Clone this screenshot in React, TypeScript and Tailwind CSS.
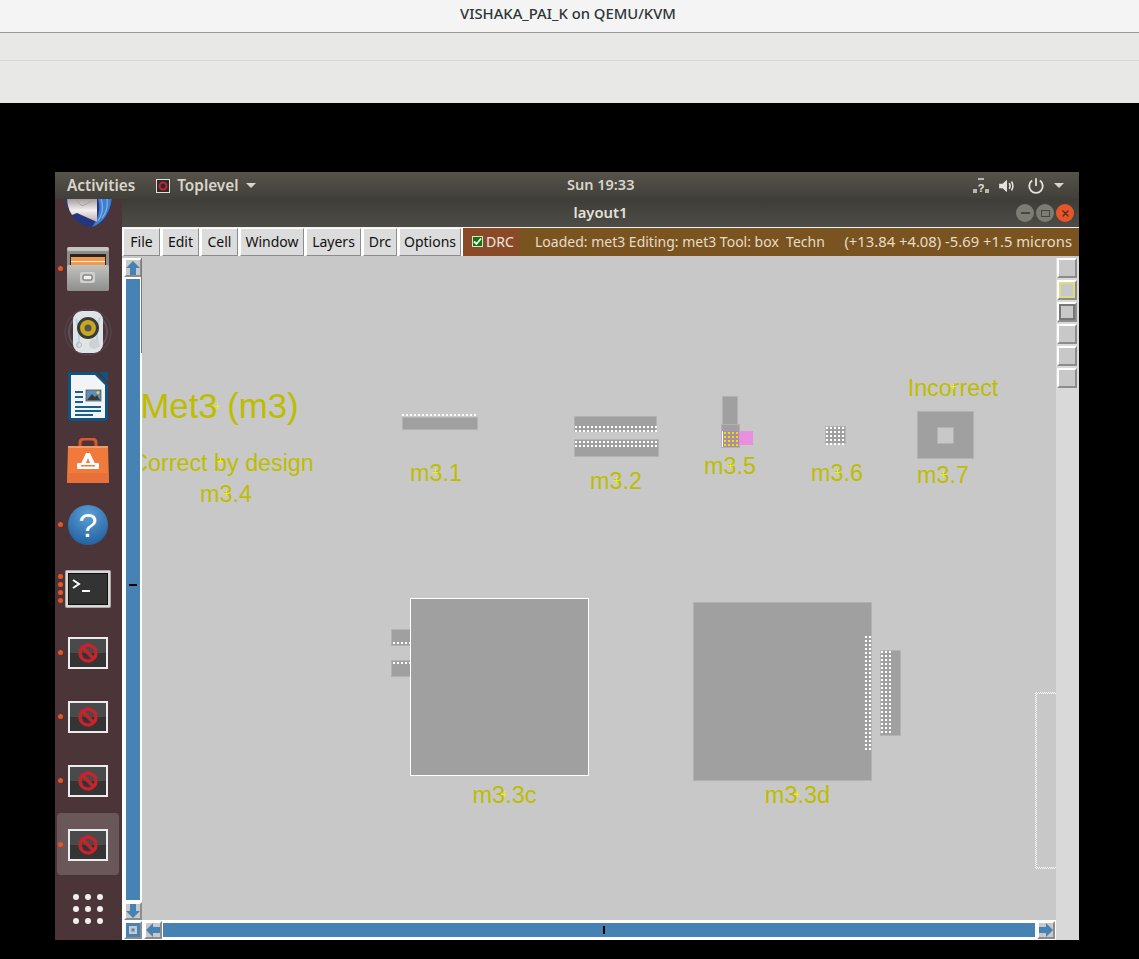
import { ReactNode } from 'react';

const menuItems = [
  { label: 'File', w: 'w-[37px]' },
  { label: 'Edit', w: 'w-[37px]' },
  { label: 'Cell', w: 'w-[37px]' },
  { label: 'Window', w: 'w-[64px]' },
  { label: 'Layers', w: 'w-[55px]' },
  { label: 'Drc', w: 'w-[34px]' },
  { label: 'Options', w: 'w-[62px]' },
];

const labels = [
  { text: 'Met3 (m3)', x: 219.5, y: 418, size: 34.7, cross: [217, 406] },
  { text: 'Correct by design', x: 222.5, y: 471, size: 23.3, cross: [220, 461] },
  { text: 'm3.4', x: 226, y: 502, size: 23.3, cross: [226, 493] },
  { text: 'm3.1', x: 436, y: 481, size: 23.3, cross: [435, 472] },
  { text: 'm3.2', x: 616, y: 489, size: 23.3, cross: [616, 480] },
  { text: 'm3.5', x: 730, y: 474, size: 23.3, cross: [730, 465] },
  { text: 'm3.6', x: 837, y: 481, size: 23.3, cross: [837, 472] },
  { text: 'm3.7', x: 943, y: 483, size: 23.3, cross: [943, 474] },
  { text: 'Incorrect', x: 953, y: 396, size: 23.3, cross: [953, 386] },
  { text: 'm3.3c', x: 504.5, y: 803, size: 23.5, cross: [504, 794] },
  { text: 'm3.3d', x: 797.5, y: 803, size: 23.5, cross: [797, 794] },
];

// x, y, w, h in page pixels, viewBox of the canvas starts at 142,258
const boxes = [
  [402, 417, 76, 13],
  [574, 416, 83, 16],
  [574, 439, 85, 18],
  [722, 396, 16, 30],
  [721, 424, 19, 24],
  [825, 426, 21, 18],
  [391, 629, 21, 17],
  [391, 660, 21, 17],
  [693, 602, 179, 179],
  [880, 650, 21, 86],
];

function Dots({ x, y, cols, rows, color = '#ffffff', step = 4 }: { x: number; y: number; cols: number; rows: number; color?: string; step?: number }) {
  return (
    <g fill={color}>
      {Array.from({ length: rows }).map((_, r) =>
        Array.from({ length: cols }).map((_, c) => (
          <rect key={`${r}-${c}`} x={x + c * step} y={y + r * step} width="2" height="2" />
        ))
      )}
    </g>
  );
}

function LayoutCanvas() {
  return (
    <svg className="flex-1 h-full bg-[#c8c8c8] overflow-visible" viewBox="142 258 914 662">
      <defs>
        <clipPath id="canvasClip">
          <rect x="139.5" y="258" width="916.5" height="662" />
        </clipPath>
        <pattern id="halo" width="2" height="2" patternUnits="userSpaceOnUse">
          <rect width="1" height="1" fill="#ffffff" />
          <rect x="1" y="1" width="1" height="1" fill="#ffffff" />
        </pattern>
      </defs>

      {boxes.map(([x, y, w, h], i) => (
        <rect key={i} x={x + 0.5} y={y + 0.5} width={w - 1} height={h - 1} fill="#a0a0a0" stroke="#b2b2b2" />
      ))}

      {/* m3.7 with hole */}
      <rect x="917.5" y="411.5" width="56" height="47" fill="#a0a0a0" stroke="#b2b2b2" />
      <rect x="937.5" y="427.5" width="16" height="16" fill="#c8c8c8" stroke="#b2b2b2" />

      {/* m3.3c, selected */}
      <rect x="410.5" y="598.5" width="178" height="177" fill="#a0a0a0" stroke="#ffffff" />

      {/* m3.5 via with pink contact */}
      <rect x="739" y="431" width="14" height="14" fill="#e88fe0" />
      <rect x="722" y="431" width="17" height="16" fill="#a88fa6" />
      <Dots x={724} y={432} cols={4} rows={4} color="#f0e000" />
      <rect x="722" y="431" width="1" height="16" fill="#ffffff" />

      {/* drc dots */}
      <Dots x={402} y={414} cols={19} rows={1} />
      <Dots x={575} y={426} cols={21} rows={2} />
      <Dots x={575} y={441} cols={21} rows={2} />
      <Dots x={826} y={427} cols={5} rows={5} />
      <Dots x={393} y={642} cols={5} rows={1} />
      <Dots x={393} y={662} cols={5} rows={1} />
      <Dots x={865} y={636} cols={2} rows={29} />
      <Dots x={881} y={651} cols={3} rows={21} />

      {/* dotted cell outline running off the edge */}
      <rect x="1035" y="692" width="21" height="2" fill="url(#halo)" />
      <rect x="1035" y="867" width="21" height="2" fill="url(#halo)" />
      <rect x="1035" y="692" width="2" height="177" fill="url(#halo)" />

      <g clipPath="url(#canvasClip)" fontFamily="'Liberation Sans', Arial, sans-serif" fill="#bdbd00" textAnchor="middle">
        {labels.map((l) => (
          <text key={l.text} x={l.x} y={l.y} fontSize={l.size}>
            {l.text}
          </text>
        ))}
        {labels.map((l) => (
          <path
            key={`${l.text}-cross`}
            d={`M${l.cross[0] - 3} ${l.cross[1] + 0.5}h6M${l.cross[0] + 0.5} ${l.cross[1] - 3}v6`}
            stroke="#f0f000"
            strokeWidth="1"
            fill="none"
          />
        ))}
      </g>
    </svg>
  );
}

function Bevel({ className, children }: { className?: string; children?: ReactNode }) {
  return (
    <div className={`flex items-center justify-center bg-[#c8c8c8] border-2 border-t-white border-l-white border-r-[#8c8c8c] border-b-[#8c8c8c] ${className ?? ''}`}>
      {children}
    </div>
  );
}

function Arrow({ dir }: { dir: 'up' | 'down' | 'left' | 'right' }) {
  const rot = { up: 0, down: 180, left: 270, right: 90 }[dir];
  return (
    <svg width="14" height="14" viewBox="0 0 14 14">
      <path d="M7 0 14 7H10V14H4V7H0Z" fill="#4682b4" transform={`rotate(${rot} 7 7)`} />
    </svg>
  );
}

function Thunderbird() {
  return (
    <svg width="48" height="48" viewBox="0 0 48 48">
      <defs>
        <linearGradient id="birdMail" x1="0" y1="0" x2="0" y2="1">
          <stop offset="0%" stopColor="#8f8688" />
          <stop offset="55%" stopColor="#f4f0ee" />
          <stop offset="100%" stopColor="#b5aeb0" />
        </linearGradient>
      </defs>
      <path d="M1 15C2 32 15 46 28 46 42 42 48 30 48 15Z" fill="#26357f" />
      <path d="M33 15C37 24 36 36 28 46 40 42 47 30 48 15Z" fill="#3f7fd0" />
      <path d="M37 18C40 26 38 34 34 40M43 18C44 25 42 32 38 37" fill="none" stroke="#7fb0e8" strokeWidth="1.2" />
      <path d="M3 15C3 24 5 29 8 34L13 32 33 41V15Z" fill="url(#birdMail)" />
      <path d="M10 17 18 25 30 19" fill="none" stroke="#a8a09c" strokeWidth="1" />
    </svg>
  );
}

function Drawer() {
  return (
    <svg width="44" height="44" viewBox="0 0 44 44">
      <defs>
        <linearGradient id="drawerFront" x1="0" y1="0" x2="0" y2="1">
          <stop offset="0%" stopColor="#c2c2c0" />
          <stop offset="100%" stopColor="#8e8e8c" />
        </linearGradient>
      </defs>
      <rect x="1" y="0" width="42" height="44" rx="3" fill="#8e8e8c" />
      <rect x="1" y="0" width="42" height="4" rx="2" fill="#c4c4c2" />
      <rect x="4" y="7" width="36" height="11" fill="#2c2420" />
      <rect x="5" y="10" width="34" height="8" fill="#f09a50" />
      <rect x="5" y="14" width="34" height="1" fill="#fff0d8" />
      <rect x="1" y="18" width="42" height="26" rx="2" fill="url(#drawerFront)" />
      <rect x="14" y="25" width="15" height="11" rx="2" fill="#d0d0ce" />
      <rect x="17" y="28" width="9" height="5" rx="1" fill="#f0f0ee" stroke="#5a5a5a" />
    </svg>
  );
}

function Speaker() {
  return (
    <svg width="48" height="48" viewBox="0 0 48 48">
      <circle cx="24" cy="23" r="23" fill="none" stroke="#6c6a78" strokeWidth="1" opacity="0.35" />
      <circle cx="24" cy="23" r="19" fill="none" stroke="#7a7c90" strokeWidth="2" opacity="0.4" />
      <rect x="9" y="2" width="30" height="42" rx="9" fill="#dfe4e6" />
      <path d="M12 10Q18 26 13 38M36 8Q30 24 35 38" fill="none" stroke="#a8c4d8" strokeWidth="2" opacity="0.6" />
      <circle cx="24" cy="19" r="11" fill="#3a3a38" />
      <circle cx="24" cy="19" r="8" fill="#c8a820" />
      <circle cx="24" cy="19" r="3.5" fill="#56564e" />
      <circle cx="30" cy="35" r="5" fill="#cfd2d2" />
      <circle cx="15" cy="36" r="2.5" fill="none" stroke="#b8baba" />
    </svg>
  );
}

function Writer() {
  return (
    <svg width="42" height="50" viewBox="0 0 42 50">
      <path d="M2 0H29L41 12V46Q41 49 38 49H4Q1 49 1 46V2Q1 0 2 0Z" fill="#10537f" />
      <path d="M4 3H28L38 13V46H4Z" fill="#f2f4f6" />
      <path d="M32 0H41V10Z" fill="#10537f" />
      <g fill="#15608f">
        <rect x="8" y="19" width="8" height="2" />
        <rect x="8" y="24" width="8" height="2" />
        <rect x="8" y="29" width="8" height="2" />
        <rect x="8" y="34" width="26" height="2" />
        <rect x="8" y="38" width="26" height="2" />
        <rect x="8" y="42" width="18" height="2" />
      </g>
      <rect x="19" y="18" width="15" height="11" fill="#5f8fb4" stroke="#4a4a4a" strokeWidth="0.7" />
      <path d="M20 28 25 22 28 25 30 23 33 28Z" fill="#3a3a3a" />
      <circle cx="31" cy="20.5" r="1.5" fill="#f0d050" />
    </svg>
  );
}

function Store() {
  return (
    <svg width="44" height="46" viewBox="0 0 44 46">
      <path d="M14 12V5Q14 1 18 1H26Q30 1 30 5V12" fill="none" stroke="#d8592a" strokeWidth="3" />
      <path d="M2 8H42L43 45H1Z" fill="#f07a3c" />
      <path d="M1.3 35H42.7L43 45H1Z" fill="#e8703a" />
      <path d="M2 8H42V10H2Z" fill="#f49a68" />
      <path d="M20 15H24L31 30H26L22 20 18 30H13Z" fill="#ffffff" />
      <rect x="11" y="25" width="22" height="6" rx="1" fill="#ffffff" />
      <rect x="15" y="27" width="14" height="1.5" fill="#f07a3c" />
    </svg>
  );
}

function Help() {
  return (
    <svg width="42" height="42" viewBox="0 0 42 42">
      <defs>
        <radialGradient id="helpBall" cx="50%" cy="25%" r="80%">
          <stop offset="0%" stopColor="#5d9fd8" />
          <stop offset="100%" stopColor="#1f5f9c" />
        </radialGradient>
      </defs>
      <circle cx="21" cy="21" r="20" fill="url(#helpBall)" />
      <text x="21" y="33" textAnchor="middle" fontSize="34" fontFamily="'Liberation Sans', sans-serif" fill="#ffffff">
        ?
      </text>
    </svg>
  );
}

function Terminal() {
  return (
    <svg width="46" height="38" viewBox="0 0 46 38">
      <rect x="0.5" y="0.5" width="45" height="37" rx="1" fill="#d8d8d6" stroke="#a8a8a6" />
      <rect x="3" y="3" width="40" height="32" fill="#101010" />
      <rect x="4" y="4" width="38" height="30" fill="#333333" />
      <path d="M8 10 14 14 8 18" fill="none" stroke="#ffffff" strokeWidth="2" />
      <rect x="17" y="20" width="8" height="2" fill="#ffffff" />
    </svg>
  );
}

function Blocked() {
  return (
    <svg width="40" height="32" viewBox="0 0 40 32">
      <rect x="0" y="0" width="40" height="32" fill="#ececec" />
      <rect x="2" y="2" width="36" height="28" fill="#4a4a4a" />
      <rect x="2" y="16" width="36" height="14" fill="#343434" />
      <circle cx="20" cy="16" r="8" fill="none" stroke="#c8222c" strokeWidth="3.4" />
      <path d="M14.5 10.5 25.5 21.5" stroke="#c8222c" strokeWidth="3.4" />
    </svg>
  );
}

function AppGrid() {
  return (
    <svg width="36" height="36" viewBox="0 0 36 36" fill="#ffffff" opacity="0.92">
      {[6, 18, 30].map((cy) =>
        [6, 18, 30].map((cx) => <circle key={`${cx}-${cy}`} cx={cx} cy={cy} r="3" />)
      )}
    </svg>
  );
}

function DockCell({ pips = 0, active, children }: { pips?: number; active?: boolean; children: ReactNode }) {
  return (
    <div className="relative h-16 w-full flex items-center justify-center shrink-0">
      {active && <div className="absolute left-[2px] top-0 w-[62px] h-[62px] rounded bg-[#6a575a]" />}
      <div className="relative flex -ml-px">{children}</div>
      {pips > 0 && (
        <div className="absolute left-[3px] top-0 bottom-[2px] flex flex-col justify-center gap-[3px]">
          {Array.from({ length: pips }).map((_, i) => (
            <span key={i} className="w-[5px] h-[5px] rounded-full bg-[#e95420]" />
          ))}
        </div>
      )}
    </div>
  );
}

function Dock() {
  return (
    <div className="w-[67px] h-full bg-[#4b3539] overflow-hidden flex flex-col shrink-0">
      <div className="flex flex-col -mt-[26px]">
        <DockCell><Thunderbird /></DockCell>
        <DockCell pips={1}><Drawer /></DockCell>
        <DockCell><Speaker /></DockCell>
        <DockCell><Writer /></DockCell>
        <DockCell><Store /></DockCell>
        <DockCell pips={1}><Help /></DockCell>
        <DockCell pips={4}><Terminal /></DockCell>
        <DockCell pips={1}><Blocked /></DockCell>
        <DockCell pips={1}><Blocked /></DockCell>
        <DockCell pips={1}><Blocked /></DockCell>
        <DockCell pips={1} active><Blocked /></DockCell>
        <DockCell><AppGrid /></DockCell>
      </div>
    </div>
  );
}

function TopBar() {
  return (
    <div className="relative h-[27px] flex items-center bg-gradient-to-b from-[#56534a] to-[#403f39] text-[15.3px] font-semibold text-[#d9d5ca]">
      <span className="ml-3">Activities</span>
      <div className="ml-[21px] flex items-center gap-[7px]">
        <svg width="14" height="14" viewBox="0 0 14 14">
          <rect x="0.5" y="0.5" width="13" height="13" fill="#2c2c2c" stroke="#e0e0e0" />
          <circle cx="7" cy="7" r="3.5" fill="none" stroke="#c8222c" strokeWidth="2" />
        </svg>
        <span>Toplevel</span>
        <span className="w-0 h-0 border-x-[5px] border-x-transparent border-t-[5px] border-t-[#d9d5ca]" />
      </div>
      <span className="absolute left-[512px] top-[2px] text-[14.5px]">Sun 19:33</span>
      <div className="ml-auto mr-[15px] flex items-center">
        <svg width="16" height="17" viewBox="0 0 16 17" fill="#b8b6ae">
          <rect x="0" y="12" width="4" height="4" />
          <rect x="12" y="12" width="4" height="4" />
          <rect x="5" y="1" width="6" height="2" />
          <text x="8" y="15" textAnchor="middle" fontSize="11" fontWeight="700" fontFamily="'Liberation Sans', sans-serif" fill="#e4e2da">?</text>
        </svg>
        <svg className="ml-[9px]" width="18" height="18" viewBox="0 0 16 16" fill="none" stroke="#e4e2da" strokeWidth="1.4">
          <path d="M1 6H4L8 2.5V13.5L4 10H1Z" fill="#e4e2da" stroke="none" />
          <path d="M10 5.5Q11.5 8 10 10.5M12 4Q14.5 8 12 12" />
        </svg>
        <svg className="ml-[11px]" width="18" height="18" viewBox="0 0 16 16" fill="none" stroke="#e4e2da" strokeWidth="1.6">
          <path d="M8 1V8M4.6 3.2A6 6 0 1 0 11.4 3.2" />
        </svg>
        <span className="ml-[9px] w-0 h-0 border-x-[5px] border-x-transparent border-t-[5px] border-t-[#d9d5ca]" />
      </div>
    </div>
  );
}

function WindowTitle() {
  return (
    <div className="relative h-[28px] flex items-center justify-center pb-[2px] bg-gradient-to-b from-[#3f3d38] to-[#4d4c46] text-[14.8px] font-semibold text-[#e4e2da]">
      <span>layout1</span>
      <div className="absolute right-[5px] top-[5px] flex gap-[2px]">
        <span className="w-[18px] h-[18px] rounded-full bg-[#7d7c74] flex items-center justify-center">
          <span className="w-[9px] h-[2px] bg-[#48473f]" />
        </span>
        <span className="w-[18px] h-[18px] rounded-full bg-[#7d7c74] flex items-center justify-center">
          <span className="w-[9px] h-[7px] border border-[#48473f]" />
        </span>
        <span className="w-[18px] h-[18px] rounded-full bg-[#e5562a] flex items-center justify-center">
          <svg width="9" height="9" viewBox="0 0 9 9" stroke="#5e2a18" strokeWidth="1.4">
            <path d="M1.5 1.5 7.5 7.5M7.5 1.5 1.5 7.5" />
          </svg>
        </span>
      </div>
    </div>
  );
}

function MenuBar() {
  return (
    <div className="h-[31px] flex border-t border-[#f0f0f0] border-b-2 border-b-[#c8c8c8] bg-white pl-[1px]">
      <div className="flex gap-[2px]">
        {menuItems.map((m) => (
          <div
            key={m.label}
            className={`${m.w} flex items-center justify-center pb-px bg-[#dcdcdc] border border-t-white border-l-white border-r-[#8c8c8c] border-b-[#8c8c8c] text-[14px] text-[#111111]`}
          >
            {m.label}
          </div>
        ))}
      </div>
      <div className="ml-[2px] w-[56px] flex items-center gap-[3px] pl-[9px] pb-px bg-[#8a4a28] text-[14px] text-[#f0e8e0]">
        <span className="w-[11px] h-[11px] flex items-center justify-center bg-[#0a7a0a] border border-[#e0e0d8]">
          <svg width="9" height="9" viewBox="0 0 9 9" fill="none" stroke="#ffffff" strokeWidth="1.8">
            <path d="M1 4.5 3.5 7 8 1.5" />
          </svg>
        </span>
        <span>DRC</span>
      </div>
      <div className="flex-1 flex items-center justify-between pl-4 pr-[7px] pb-px bg-[#7a5420] text-[#e6dcc8] whitespace-pre">
        <span className="text-[14px]">Loaded: met3 Editing: met3 Tool: box  Techn</span>
        <span className="text-[14.8px]">(+13.84 +4.08) -5.69 +1.5 microns</span>
      </div>
    </div>
  );
}

function LeftScroll() {
  return (
    <div className="relative w-[20px] h-full flex flex-col items-center bg-white pl-px">
      <Bevel className="w-[18px] h-[19px] shrink-0"><Arrow dir="up" /></Bevel>
      <div className="relative flex-1 w-[14px] my-[2px] bg-[#4682b4]">
        <div className="absolute left-[3px] top-[305px] w-[8px] h-[2px] bg-black" />
      </div>
      <Bevel className="w-[18px] h-[18px] shrink-0"><Arrow dir="down" /></Bevel>
      <div className="absolute right-0 top-0 w-px h-[95px] bg-[#7a7a7a]" />
    </div>
  );
}

function RightPanel() {
  return (
    <div className="w-[23px] h-full bg-[#d9d9d9] flex flex-col gap-[2px] pl-px pr-[2px]">
      <Bevel className="h-[20px]" />
      <Bevel className="h-[20px]">
        <span className="w-[16px] h-[16px] border-2 border-[#dcdc80]" />
      </Bevel>
      <Bevel className="h-[20px]">
        <span className="w-[16px] h-[16px] border-2 border-[#777777]" />
      </Bevel>
      <Bevel className="h-[20px]" />
      <Bevel className="h-[20px]" />
      <Bevel className="h-[20px]" />
    </div>
  );
}

function BottomScroll() {
  return (
    <div className="h-[20px] flex items-center bg-white">
      <Bevel className="ml-[2px] w-[18px] h-[18px] shrink-0">
        <svg width="14" height="14" viewBox="0 0 14 14">
          <path fillRule="evenodd" d="M0 0H14V14H0ZM3 3V11H11V3Z" fill="#4682b4" />
          <rect x="5.5" y="5.5" width="3" height="3" fill="#4682b4" />
        </svg>
      </Bevel>
      <Bevel className="ml-[2px] w-[18px] h-[18px] shrink-0"><Arrow dir="left" /></Bevel>
      <div className="relative ml-[1px] flex-1 h-[14px] bg-[#4682b4]">
        <div className="absolute left-[440px] top-[3px] w-[2px] h-[8px] bg-black" />
      </div>
      <Bevel className="ml-[2px] w-[18px] h-[18px] shrink-0"><Arrow dir="right" /></Bevel>
      <div className="ml-px w-[23px] h-full bg-[#d9d9d9] shrink-0" />
    </div>
  );
}

export default function App() {
  return (
    <div className="w-[1139px] h-[959px] bg-black flex flex-col overflow-hidden font-['Noto_Sans',sans-serif]">
      {/* host viewer chrome */}
      <div className="h-[33px] pb-[5px] pr-[3px] bg-[#f4f4f4] border-b border-[#999999] flex items-center justify-center text-[14.8px] font-medium text-[#2e3436] shrink-0">
        VISHAKA_PAI_K on QEMU/KVM
      </div>
      <div className="h-[28px] bg-[#e8e8e7] border-b border-[#d6d6d4] shrink-0" />
      <div className="h-[42px] bg-[#e8e8e7] shrink-0" />

      {/* guest desktop */}
      <div className="mt-[69px] ml-[55px] w-[1024px] h-[768px] flex flex-col">
        <TopBar />
        <div className="flex flex-1 min-h-0">
          <Dock />
          <div className="flex-1 min-w-0 flex flex-col">
            <WindowTitle />
            <MenuBar />
            <div className="h-[662px] flex">
              <LeftScroll />
              <LayoutCanvas />
              <RightPanel />
            </div>
            <BottomScroll />
          </div>
        </div>
      </div>
    </div>
  );
}
